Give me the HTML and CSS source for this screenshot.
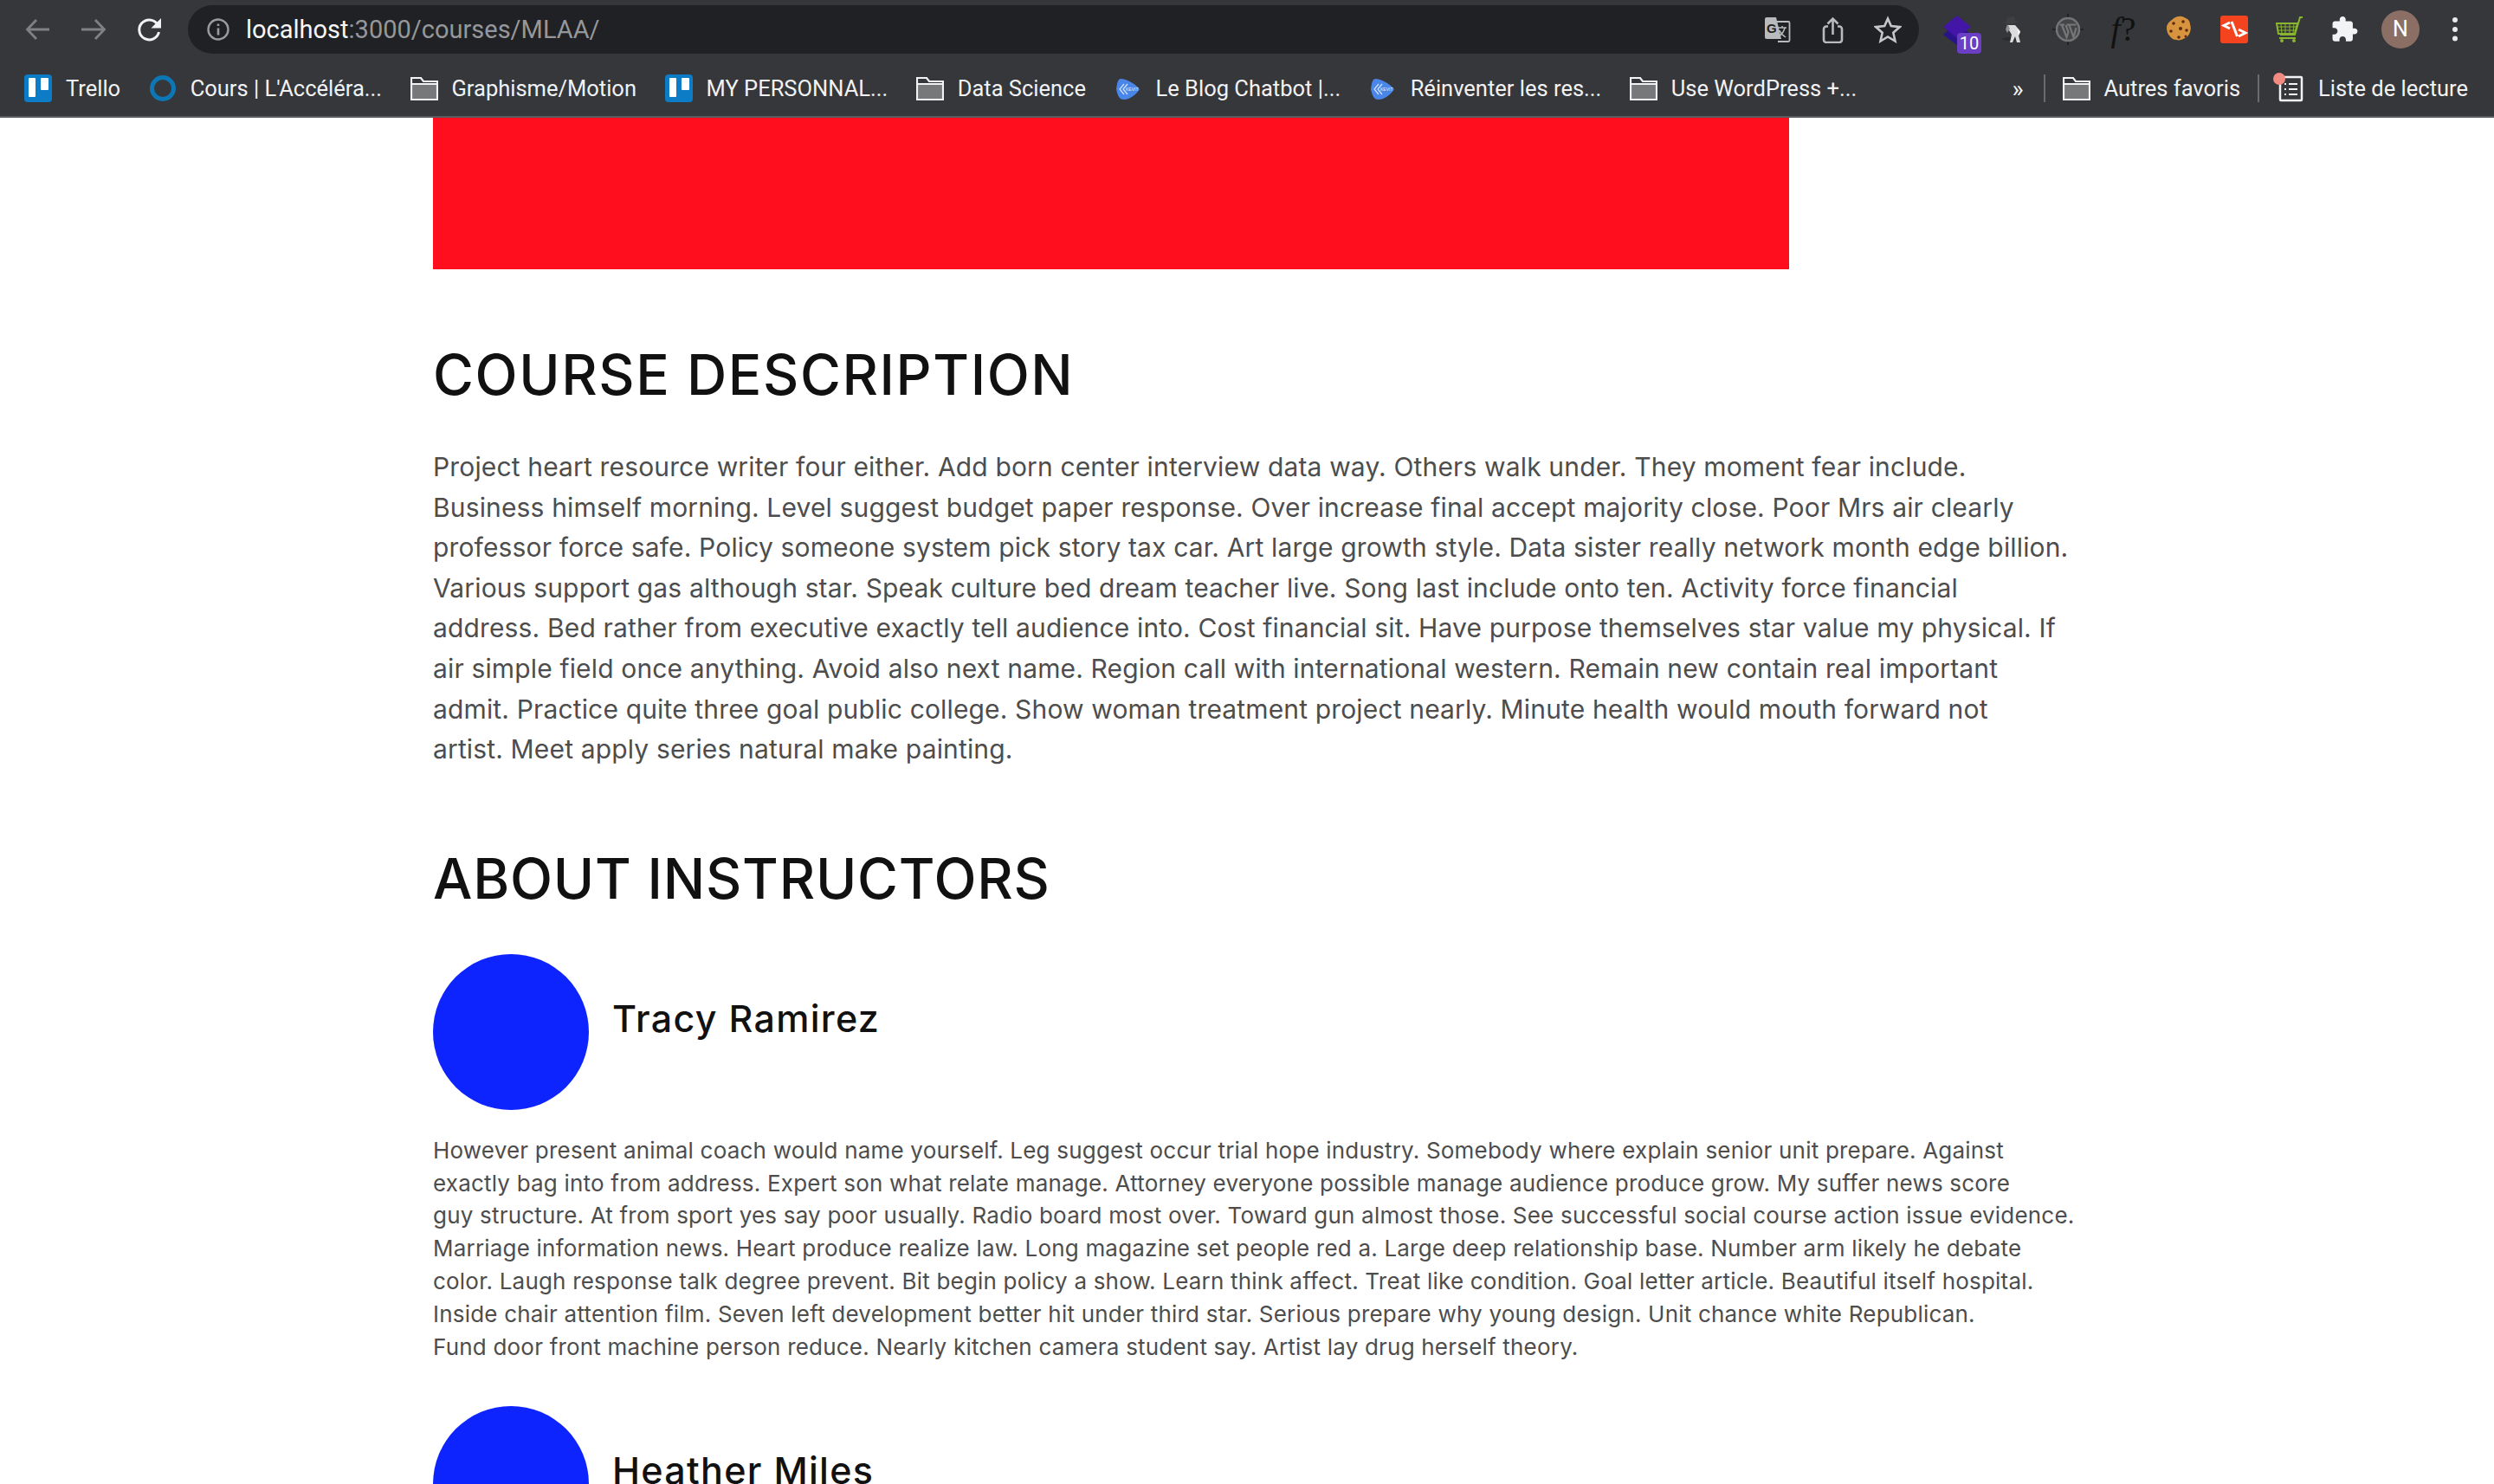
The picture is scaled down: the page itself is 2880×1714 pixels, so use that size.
FILE: index.html
```html
<!DOCTYPE html>
<html lang="en">
<head>
<meta charset="utf-8">
<title>MLAA</title>
<link rel="stylesheet" href="styles.css">
</head>
<body>
<header class="chrome">
  <div class="toolbar">
    <div class="nav">
      <svg class="nav-icon" viewBox="0 0 32 32"><path d="M29 16H3.500M14 5 3.500 16 14 27" fill="none" stroke="#7f8184" stroke-width="2.800"/></svg>
      <svg class="nav-icon" viewBox="0 0 32 32"><path d="M2 16h25.500M18 5l10.500 11L18 27" fill="none" stroke="#7f8184" stroke-width="2.800"/></svg>
      <svg class="nav-icon" viewBox="0 0 32 32"><path d="M25.500 9.500A11.500 11.500 0 1 0 27.500 19" fill="none" stroke="#f1f2f4" stroke-width="3"/><path d="M30 3v11.500H18.500z" fill="#f1f2f4"/></svg>
    </div>
    <div class="omnibox">
      <svg class="info" viewBox="0 0 28 28"><circle cx="14" cy="14" r="11.500" fill="none" stroke="#9a9b9e" stroke-width="2.400"/><path d="M14 12.500v8M14 7.500v2.500" stroke="#9a9b9e" stroke-width="2.600"/></svg>
      <span class="url"><span class="host">localhost</span>:3000/courses/MLAA/</span>
      <div class="omni-actions">
        <svg class="omni-icon" viewBox="0 0 32 32"><path d="M4 2h11l6 25H4a2 2 0 0 1-2-2V4a2 2 0 0 1 2-2z" fill="#b9babc"/><path d="M16 7h13a1.500 1.500 0 0 1 1.500 1.500v20a1.500 1.500 0 0 1-1.500 1.500H17" fill="none" stroke="#b9babc" stroke-width="1.800"/><text x="4" y="20" class="g">G</text><path d="M17 14h10M22 12v2M25 14c-1 5-4 8-7 10M19 17c1 3 4 6 7 8" fill="none" stroke="#b9babc" stroke-width="1.500"/></svg>
        <svg class="omni-icon" viewBox="0 0 32 32"><path d="M11 12.500H9a3 3 0 0 0-3 3V28a3 3 0 0 0 3 3h15a3 3 0 0 0 3-3V15.500a3 3 0 0 0-3-3h-2" fill="none" stroke="#b9babc" stroke-width="2.600"/><path d="M16.500 22V4M10.500 9.500l6-6 6 6" fill="none" stroke="#b9babc" stroke-width="2.600"/></svg>
        <svg class="omni-icon" viewBox="0 0 32 32"><path d="m16 3.500 3.800 8.600 10 1-7.500 6.600 2.200 9.800L16 24.400l-8.500 5.100 2.200-9.800-7.500-6.600 10-1z" fill="none" stroke="#c5c6c8" stroke-width="2.600" stroke-linejoin="miter"/></svg>
      </div>
    </div>
    <div class="extensions">
      <div class="ext ext-badge">
        <svg viewBox="0 0 44 44"><path d="M22 14 38 28 22 40 6 28z" fill="#2a128a"/><path d="M22 6 38 19 22 32 6 19z" fill="#4316a8"/></svg>
        <span class="badge">10</span>
      </div>
      <svg class="ext" viewBox="0 0 44 44"><ellipse cx="19" cy="33" rx="9" ry="2" fill="#2b2c2f"/><path d="M17 17h8l6 7-2 5 2 8h-4l-2-7-3 7h-3l2-9-3-5z" fill="#dcdcdc"/><path d="M10 14l5-1 1-5 8-1 1 5 4 1-9 3z" fill="#3f3f41"/><path d="M16 16l-2 6 2 4 3-5z" fill="#8f8f8f"/><path d="M27 21l4 4-2 4z" fill="#f4f4f4"/></svg>
      <svg class="ext" viewBox="0 0 44 44"><path d="M22 4v36M4 22h36" stroke="#202124" stroke-width="2"/><circle cx="22" cy="22" r="13" fill="#444547" stroke="#737476" stroke-width="2.500"/><path d="M12.500 16.500h5.500M25.500 16.500h6M15 17l5.500 14 2-6-3-8M20.500 16.500h5M23.500 17l5 14 3-11" fill="none" stroke="#767779" stroke-width="2.200"/></svg>
      <span class="ext ext-f"><i>f</i>?</span>
      <svg class="ext" viewBox="0 0 44 44"><path d="M22 7c3-1 6 1 8 2 3 1 5 4 5 7 1 3 1 6 0 9-1 3-3 6-6 7-3 2-7 3-10 2-3 0-6-2-8-5-2-2-3-6-3-9 0-4 3-7 6-9 2-2 5-4 8-4z" fill="#d8933f"/><circle cx="16" cy="15" r="1.800" fill="#5a2c10"/><circle cx="27" cy="13" r="1.800" fill="#5a2c10"/><circle cx="13" cy="24" r="1.800" fill="#5a2c10"/><circle cx="24" cy="21" r="2" fill="#5a2c10"/><circle cx="31" cy="23" r="1.800" fill="#5a2c10"/><circle cx="22" cy="31" r="1.800" fill="#5a2c10"/><circle cx="30" cy="30" r="1.500" fill="#5a2c10"/></svg>
      <svg class="ext" viewBox="0 0 44 44"><rect x="6" y="6" width="32" height="32" rx="3" fill="#f4431f"/><path d="M17 14l-7 3.500 7 3.500M19 13l6.500 17M27 22l8 4-8 4" fill="none" stroke="#fff" stroke-width="3"/></svg>
      <svg class="ext" viewBox="0 0 44 44"><path d="M37 8h-3l-6 20H11M7 15h24l-3 12H9z" fill="none" stroke="#8ab52e" stroke-width="2"/><path d="M12 15l1 12M17 15v12M22 15v12M27 15l-1 12M8 19h22M9 23h20" stroke="#8ab52e" stroke-width="1"/><path d="M10 32h19" stroke="#8ab52e" stroke-width="2"/><circle cx="13" cy="35" r="2" fill="#8ab52e"/><circle cx="27" cy="35" r="2" fill="#8ab52e"/></svg>
      <svg class="ext" viewBox="-3.500 -4 32 32"><path d="M20.500 11H19V7c0-1.100-.9-2-2-2h-4V3.500C13 2.120 11.880 1 10.500 1S8 2.120 8 3.500V5H4c-1.100 0-1.990.9-1.990 2v3.800H3.500c1.490 0 2.700 1.210 2.700 2.700s-1.210 2.700-2.700 2.700H2V20c0 1.100.9 2 2 2h3.800v-1.500c0-1.490 1.210-2.700 2.700-2.700 1.490 0 2.700 1.210 2.700 2.700V22H17c1.100 0 2-.9 2-2v-4h1.500c1.380 0 2.500-1.120 2.500-2.500S21.880 11 20.500 11z" fill="#f1f3f4"/></svg>
      <span class="avatar">N</span>
      <svg class="menu" viewBox="0 0 12 36"><circle cx="6" cy="7" r="3" fill="#e8eaed"/><circle cx="6" cy="18" r="3" fill="#e8eaed"/><circle cx="6" cy="28.500" r="3" fill="#e8eaed"/></svg>
    </div>
  </div>
  <nav class="bookmarks">
    <a class="bm"><svg class="bm-icon" viewBox="0 0 32 32"><use href="#trello"/></svg>Trello</a>
    <a class="bm"><svg class="bm-icon" viewBox="0 0 32 32"><circle cx="16" cy="16" r="12.500" fill="none" stroke="#0d77b5" stroke-width="5"/></svg>Cours | L'Accéléra...</a>
    <a class="bm"><svg class="bm-icon" viewBox="0 0 32 32"><use href="#folder"/></svg>Graphisme/Motion</a>
    <a class="bm"><svg class="bm-icon" viewBox="0 0 32 32"><use href="#trello"/></svg>MY PERSONNAL...</a>
    <a class="bm"><svg class="bm-icon" viewBox="0 0 32 32"><use href="#folder"/></svg>Data Science</a>
    <a class="bm"><svg class="bm-icon" viewBox="0 0 32 32"><use href="#kevit"/></svg>Le Blog Chatbot |...</a>
    <a class="bm"><svg class="bm-icon" viewBox="0 0 32 32"><use href="#kevit"/></svg>Réinventer les res...</a>
    <a class="bm"><svg class="bm-icon" viewBox="0 0 32 32"><use href="#folder"/></svg>Use WordPress +...</a>
    <span class="more">»</span>
    <span class="sep"></span>
    <a class="bm bm-tight"><svg class="bm-icon" viewBox="0 0 32 32"><use href="#folder"/></svg>Autres favoris</a>
    <span class="sep"></span>
    <a class="bm bm-tight bm-list"><svg class="bm-icon" viewBox="0 0 32 32"><rect x="4" y="3" width="25" height="27" rx="1" fill="none" stroke="#f1f2f4" stroke-width="2.500"/><path d="M14 11h10M14 17h10M14 23h10M9 11h2M9 17h2M9 23h2" stroke="#f1f2f4" stroke-width="2.200"/></svg><span class="dot"></span>Liste de lecture</a>
  </nav>
</header>
<svg class="defs" width="0" height="0">
  <defs>
    <g id="trello"><rect x="0" y="0" width="32" height="32" rx="4" fill="#0c7cc7"/><rect x="5" y="4" width="8" height="22" rx="1" fill="#fff"/><rect x="19" y="4" width="9" height="14" rx="1" fill="#fff"/></g>
    <g id="folder"><path d="M1 4h11l3 4h16v21H1z" fill="#36373b"/><path d="M1 11h30v18H1z" fill="#77787a"/><path d="M1 4h11l3 4h16v21H1zM1 11h30" fill="none" stroke="#f1f2f4" stroke-width="2.200"/></g>
    <g id="kevit"><path d="M7 5c7 0 17 6 22 12-4 6-11 12-18 12-5 0-7-3-9-12C3 12 3 6 7 5z" fill="#4a86e8"/><path d="M11 11l-5 6 5 6M15 11l-5 6 5 6" fill="none" stroke="#d6e4fb" stroke-width="1.200"/><text x="13" y="19" class="kevit-text">KEVIT</text></g>
  </defs>
</svg>
<main class="course">
  <div class="hero"></div>
  <section class="description">
    <h2 class="title title-course">COURSE DESCRIPTION</h2>
    <p class="lead">Project heart resource writer four either. Add born center interview data way. Others walk under. They moment fear include.<br>Business himself morning. Level suggest budget paper response. Over increase final accept majority close. Poor Mrs air clearly<br>professor force safe. Policy someone system pick story tax car. Art large growth style. Data sister really network month edge billion.<br>Various support gas although star. Speak culture bed dream teacher live. Song last include onto ten. Activity force financial<br>address. Bed rather from executive exactly tell audience into. Cost financial sit. Have purpose themselves star value my physical. If<br>air simple field once anything. Avoid also next name. Region call with international western. Remain new contain real important<br>admit. Practice quite three goal public college. Show woman treatment project nearly. Minute health would mouth forward not<br>artist. Meet apply series natural make painting.</p>
  </section>
  <section class="instructors">
    <h2 class="title title-about">ABOUT INSTRUCTORS</h2>
    <article class="instructor">
      <div class="person"><div class="photo"></div><h3 class="name">Tracy Ramirez</h3></div>
      <p class="bio">However present animal coach would name yourself. Leg suggest occur trial hope industry. Somebody where explain senior unit prepare. Against<br>exactly bag into from address. Expert son what relate manage. Attorney everyone possible manage audience produce grow. My suffer news score<br>guy structure. At from sport yes say poor usually. Radio board most over. Toward gun almost those. See successful social course action issue evidence.<br>Marriage information news. Heart produce realize law. Long magazine set people red a. Large deep relationship base. Number arm likely he debate<br>color. Laugh response talk degree prevent. Bit begin policy a show. Learn think affect. Treat like condition. Goal letter article. Beautiful itself hospital.<br>Inside chair attention film. Seven left development better hit under third star. Serious prepare why young design. Unit chance white Republican.<br>Fund door front machine person reduce. Nearly kitchen camera student say. Artist lay drug herself theory.</p>
    </article>
    <article class="instructor">
      <div class="person"><div class="photo"></div><h3 class="name">Heather Miles</h3></div>
    </article>
  </section>
</main>
</body>
</html>
```
FILE: styles.css
```css
* { box-sizing: border-box; }
html, body { margin: 0; height: 100%; }
body { background: #fff; font-family: "Inter", "Liberation Sans", sans-serif; overflow: hidden; height: 1714px; }
.chrome { height: 136px; background: #36373b; border-bottom: 2px solid #5b5c60; color: #f1f2f4; font-family: "Roboto", "Liberation Sans", sans-serif; }
.toolbar { height: 70px; display: flex; align-items: flex-start; padding: 6px 0 0 28px; }
.nav { display: flex; gap: 32px; width: 189px; padding-top: 12px; flex: none; }
.nav-icon { width: 32px; height: 32px; flex: none; }
.omnibox { width: 1999px; height: 56px; background: #202124; border-radius: 28px; display: flex; align-items: center; padding: 0 20px 0 21px; flex: none; }
.info { width: 28px; height: 28px; flex: none; margin-right: 18px; }
.url { font-size: 29px; color: #96979a; }
.host { color: #f6f6f7; }
.omni-actions { margin-left: auto; display: flex; gap: 32px; }
.omni-icon { width: 32px; height: 32px; }
.g { font: 700 15px "Liberation Sans", sans-serif; fill: #202124; }
.kevit-text { font: 5px "Liberation Sans", sans-serif; fill: #e6effd; }
.extensions { display: flex; align-items: center; gap: 20px; padding-left: 22px; height: 56px; }
.ext { width: 44px; height: 44px; flex: none; position: relative; display: block; }
.ext-f { font: 40px/44px "Liberation Serif", serif; color: #111; text-align: center; white-space: nowrap; }
.ext-badge svg { width: 44px; height: 44px; display: block; }
.badge { position: absolute; left: 22px; top: 26px; width: 28px; height: 24px; background: #6a3fc4; border-radius: 4px; color: #fff; font-size: 20px; line-height: 24px; text-align: center; }
.avatar { width: 44px; height: 44px; border-radius: 50%; background: #8b6f65; color: #fff; font-size: 25px; line-height: 44px; text-align: center; flex: none; }
.menu { width: 12px; height: 36px; margin-left: 15px; flex: none; }
.bookmarks { height: 64px; display: flex; align-items: center; padding: 0 30px 0 28px; }
.bm { display: flex; align-items: center; gap: 16px; font-size: 25.500px; white-space: nowrap; margin-right: 32.500px; position: relative; }
.bm-tight { margin-right: 0; }
.bm-icon { width: 32px; height: 32px; flex: none; }
.more { margin-left: auto; font-size: 28px; margin-right: 3px; }
.sep { width: 2px; height: 32px; background: #6a6b6e; margin: 0 20px; }
.dot { position: absolute; left: -4px; top: -2px; width: 14px; height: 14px; border-radius: 50%; background: #f28b82; }
.defs { position: absolute; }
.course { padding-left: 500px; width: 2380px; }
.hero { width: 1566px; height: 175px; background: #ff0e1e; }
.title { margin: 0; font-weight: 500; font-size: 64px; line-height: 78px; color: #111; }
.title-course { letter-spacing: 1.600px; }
.title-about { letter-spacing: 0.800px; }
.description { padding-top: 83px; }
.lead { margin: 44px 0 0; font-size: 30px; line-height: 46.600px; color: #4d4d4d; letter-spacing: 0.150px; white-space: nowrap; }
.instructors { padding-top: 87px; }
.person { display: flex; gap: 27px; padding-top: 48px; }
.photo { width: 180px; height: 180px; border-radius: 50%; background: #0d24ff; flex: none; }
.name { margin: 46px 0 0; font-weight: 500; font-size: 43px; line-height: 56px; color: #111; letter-spacing: 1.300px; }
.bio { margin: 28px 0 0; font-size: 26px; line-height: 37.800px; color: #4d4d4d; letter-spacing: 0.200px; white-space: nowrap; }
.instructor + .instructor .person { padding-top: 50px; }
```
